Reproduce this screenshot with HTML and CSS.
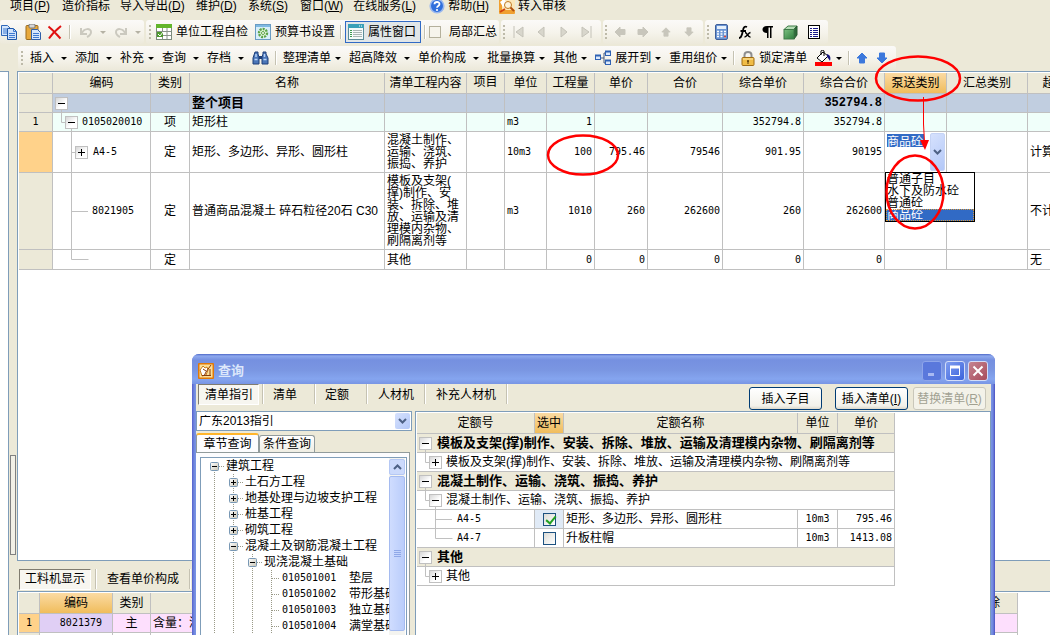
FILE: index.html
```html
<!DOCTYPE html>
<html lang="zh-CN">
<head>
<meta charset="utf-8">
<title>计价软件</title>
<link rel="stylesheet" href="styles.css">
</head>
<body>
<svg class="defs" width="0" height="0" aria-hidden="true">
  <defs>
    <linearGradient id="g-box" x1="0" y1="0" x2="1" y2="1"><stop offset="0" stop-color="#d4d4d4"/><stop offset="0.6" stop-color="#fff"/></linearGradient>
    <linearGradient id="g-small" x1="0" y1="0" x2="1" y2="1"><stop offset="0" stop-color="#fff"/><stop offset="1" stop-color="#c8c4b4"/></linearGradient>
    <linearGradient id="g-green" x1="0" y1="0" x2="1" y2="1"><stop offset="0" stop-color="#7cc080"/><stop offset="1" stop-color="#2e7d3c"/></linearGradient>
    <g id="box-minus"><rect x=".5" y=".5" width="12" height="12" fill="url(#g-box)" stroke="#c0c0c0"/><path d="M3 6.500h7" stroke="#000"/></g>
    <g id="box-plus"><rect x=".5" y=".5" width="12" height="12" fill="url(#g-box)" stroke="#c0c0c0"/><path d="M3 6.500h7M6.500 3v7" stroke="#000"/></g>
    <g id="sm-minus"><rect x=".5" y=".5" width="8" height="8" rx="1" fill="url(#g-small)" stroke="#7898b5"/><path d="M2 4.500h5" stroke="#000"/></g>
    <g id="sm-plus"><rect x=".5" y=".5" width="8" height="8" rx="1" fill="url(#g-small)" stroke="#7898b5"/><path d="M2 4.500h5M4.500 2v5" stroke="#000"/></g>
    <symbol id="caret" viewBox="0 0 6 3"><path d="M0 0h6L3 3z" fill="currentColor"/></symbol>
    <symbol id="chev" viewBox="0 0 9 6"><path d="M1 1l3.500 3.500L8 1" fill="none" stroke="#4d6185" stroke-width="2"/></symbol>
    <symbol id="arrow-up" viewBox="0 0 12 12"><path d="M6 1l5 5H8.500v5h-5V6H1z" fill="currentColor" stroke="currentColor" stroke-linejoin="round"/></symbol>
  </defs>
</svg>

<div class="app">
  <nav class="menubar">
    <button class="menu">项目(<u>P</u>)</button>
    <button class="menu menu-plain">造价指标</button>
    <button class="menu menu-long">导入导出(<u>D</u>)</button>
    <button class="menu">维护(<u>D</u>)</button>
    <button class="menu">系统(<u>S</u>)</button>
    <button class="menu">窗口(<u>W</u>)</button>
    <button class="menu menu-long">在线服务(<u>L</u>)</button>
    <button class="menu menu-icon"><svg width="16" height="16" viewBox="0 0 16 16"><circle cx="8" cy="8" r="6.800" fill="#2f6fdc" stroke="#9ab8ee" stroke-width="1.600"/><path d="M5.500 6.300c0-3 5-3 5-.3C10.500 8 8 7.800 8 9.800" fill="none" stroke="#fff" stroke-width="1.800"/><circle cx="8" cy="12" r="1.100" fill="#fff"/></svg><span class="menu-text">帮助(<u>H</u>)</span></button>
    <button class="menu menu-icon"><svg width="16" height="16" viewBox="0 0 16 16"><rect width="16" height="16" rx="1" fill="#f0a030"/><rect x="3" width="13" height="12" fill="#fbe6b8"/><path d="M1 4l4-3 3 4-4 4z" fill="#fff"/><circle cx="9" cy="7" r="3.500" fill="#fdf4dc" stroke="#c07820"/><path d="M11.500 9.500L15 13" stroke="#b05010" stroke-width="2"/><path d="M1 14l5-3" stroke="#d04010" stroke-width="2"/></svg>转入审核</button>
  </nav>

  <div class="bars">
    <div class="bar bar-edit">
      <button class="tool" aria-label="复制"><svg width="16" height="16" viewBox="0 0 16 16"><path d="M.5 1.500h6l3 3v7h-9z" fill="#d3e5fc" stroke="#2f67b8"/><path d="M2 5h4M2 7h4M2 9h4" stroke="#3f7ad0"/><path d="M6.500 4.500h6l3 3v8h-9z" fill="#cfe2fb" stroke="#1f57a8"/><path d="M12.500 4.500v3h3M8 9.500h6M8 11.500h6M8 13.500h6" fill="none" stroke="#3f7ad0"/></svg></button>
      <button class="tool" aria-label="粘贴"><svg width="16" height="16" viewBox="0 0 16 16"><rect x="1" y="1.500" width="12" height="14" rx="1" fill="#e8a93c" stroke="#9a6a1c"/><rect x="4" y="0" width="6" height="4" rx="1" fill="#d6d6d6" stroke="#777"/><path d="M6.500 5.500h6l3 3v7h-9z" fill="#d6e6fb" stroke="#2f5fa8"/><path d="M8 9.500h6M8 11.500h6M8 13.500h6" stroke="#3f7ad0"/></svg></button>
      <button class="tool del" aria-label="删除"><svg width="16" height="16" viewBox="0 0 16 16"><path d="M1.500 2.500C6 6 10 11 13.500 14.500M14 2C9 6 5 10 2 14.500" fill="none" stroke="#e01010" stroke-width="2"/></svg></button>
      <span class="sep"></span>
      <button class="tool off" aria-label="撤销"><svg width="14" height="14" viewBox="0 0 14 14"><path d="M2 3v6h6M3 8c2-5 9-5 9-1 0 3-2 4-4 5" fill="none" stroke="#cbc9bf" stroke-width="2"/></svg><svg class="caret"><use href="#caret"/></svg></button>
      <button class="tool off" aria-label="重做"><svg width="14" height="14" viewBox="0 0 14 14"><path d="M12 3v6H6M11 8C9 3 2 3 2 7c0 3 2 4 4 5" fill="none" stroke="#cbc9bf" stroke-width="2"/></svg><svg class="caret"><use href="#caret"/></svg></button>
    </div>
    <div class="bar bar-view">
      <span class="grip"></span>
      <button class="tool"><svg width="16" height="16" viewBox="0 0 16 16"><rect x=".5" y="1.500" width="15" height="14" fill="#fff" stroke="#7c8b7c"/><rect width="16" height="4" fill="#62b52a"/><path d="M1 7.500h14M1 11.500h14M6.500 4v11M11 4v11" stroke="#8a948a"/><rect x="1" y="8" width="6" height="5" fill="#4d9a2c"/><path d="M2 10l2 2 3-4" fill="none" stroke="#fff"/></svg>单位工程自检</button>
      <button class="tool"><svg width="16" height="16" viewBox="0 0 16 16"><rect x=".5" y=".5" width="15" height="15" fill="#d8eefa" stroke="#6a9cc4"/><rect x="1" y="1" width="14" height="2" fill="#7fb9e2"/><circle cx="8" cy="9" r="4" fill="#e8f8e0" stroke="#5ba346" stroke-width="2.400" stroke-dasharray="2 1"/><circle cx="8" cy="9" r="1.500" fill="#fff" stroke="#5ba346"/></svg>预算书设置</button>
      <span class="sep"></span>
      <button class="tool pressed"><svg width="16" height="16" viewBox="0 0 16 16"><rect x=".5" y=".5" width="15" height="15" fill="#f4fafa" stroke="#5a8c98"/><rect width="16" height="4" fill="#3aa0b8"/><path d="M11 2h1M13 2h1" stroke="#fff"/><path d="M2 6.500h2M2 8.500h2M2 10.500h2M2 12.500h2" stroke="#3a9a50"/><path d="M5 6.500h9M5 8.500h9M5 10.500h9M5 12.500h9" stroke="#a8b4b4"/></svg>属性窗口</button>
      <span class="sep sep-toggle"></span>
      <label class="toggle"><input type="checkbox">局部汇总</label>
    </div>
    <div class="bar bar-icons">
      <span class="grip"></span>
      <button class="ico" aria-label="首行"><svg width="12" height="12" viewBox="0 0 12 12"><path d="M2 0v12M11 1v10L4 6z" fill="#d8d6cc" stroke="#c4c2b8"/></svg></button>
      <button class="ico" aria-label="上一行"><svg width="12" height="12" viewBox="0 0 12 12"><path d="M9 1v10L3 6z" fill="#d8d6cc" stroke="#c4c2b8"/></svg></button>
      <button class="ico" aria-label="下一行"><svg width="12" height="12" viewBox="0 0 12 12"><path d="M3 1v10l6-5z" fill="#d8d6cc" stroke="#c4c2b8"/></svg></button>
      <button class="ico" aria-label="末行"><svg width="12" height="12" viewBox="0 0 12 12"><path d="M10 0v12M1 1v10l7-5z" fill="#d8d6cc" stroke="#c4c2b8"/></svg></button>
    </div>
    <div class="bar bar-icons">
      <span class="grip"></span>
      <button class="ico gray" aria-label="左移"><svg class="rot-l" width="12" height="12"><use href="#arrow-up"/></svg></button>
      <button class="ico gray" aria-label="右移"><svg class="rot-r" width="12" height="12"><use href="#arrow-up"/></svg></button>
      <button class="ico gray" aria-label="上移"><svg width="10" height="12"><use href="#arrow-up"/></svg></button>
      <button class="ico gray" aria-label="下移"><svg class="rot-d" width="10" height="12"><use href="#arrow-up"/></svg></button>
    </div>
    <div class="bar bar-icons">
      <span class="grip"></span>
      <button class="ico" aria-label="计算器"><svg width="13" height="16" viewBox="0 0 13 16"><rect x=".5" y=".5" width="12" height="15" rx="1.500" fill="#6b95d4" stroke="#3f5f9a"/><rect x="2" y="2" width="9" height="3" fill="#e6f0fb"/><path d="M2 7.500h9M2 10h9M2 12.500h9" stroke="#fff" stroke-width="1.500" stroke-dasharray="2 1.500"/><path d="M9 12.500h2" stroke="#e04030" stroke-width="1.500"/></svg></button>
      <button class="ico" aria-label="函数"><svg width="14" height="14" viewBox="0 0 14 14"><path d="M1 13c3 0 3-4 4-8 .5-3 2-4 4-3M2.500 6H8" fill="none" stroke="#000" stroke-width="1.800"/><path d="M7 7.500c2 0 3 5 5.500 4.500M12.500 7.500C10 8 9 12 6.500 12" fill="none" stroke="#000" stroke-width="1.500"/></svg></button>
      <button class="ico" aria-label="段落"><svg width="11" height="13" viewBox="0 0 11 13"><path d="M5 0h6v1.500H9.500V12H8V1.500H6.500V12H5V7C-1 7-1 0 5 0z" fill="#000"/></svg></button>
      <button class="ico" aria-label="模型"><svg width="15" height="15" viewBox="0 0 15 15"><path d="M1 4.500L5 1h9l-3 3.500z" fill="#b5ddb5" stroke="#3e7a48"/><path d="M11 4.500L14 1v9l-3 4z" fill="#2d6b3a" stroke="#28582f"/><rect x="1" y="4.500" width="10" height="9.500" fill="url(#g-green)" stroke="#3e7a48"/></svg></button>
      <button class="ico" aria-label="列表"><svg width="12" height="14" viewBox="0 0 12 14"><rect x=".5" y=".5" width="11" height="13" fill="#fff" stroke="#000"/><path d="M2 3.500h2M2 5.500h2M2 7.500h2M2 9.500h2M2 11.500h2M5 3.500h5M5 5.500h5M5 7.500h5M5 9.500h5M5 11.500h5" stroke="#1a1a8c"/></svg></button>
    </div>
  </div>

  <div class="bar bar-actions">
    <span class="grip"></span>
    <button class="act wide">插入<svg class="caret"><use href="#caret"/></svg></button>
    <button class="act wide">添加<svg class="caret"><use href="#caret"/></svg></button>
    <button class="act">补充<svg class="caret"><use href="#caret"/></svg></button>
    <button class="act wide">查询<svg class="caret"><use href="#caret"/></svg></button>
    <button class="act wide">存档<svg class="caret"><use href="#caret"/></svg></button>
    <button class="act" aria-label="查找"><svg width="17" height="14" viewBox="0 0 17 14"><path d="M3 1h3v2l1 3v7H1V7z M11 1h3v2l2 4v6h-6V6l1-3z" fill="#4b76b8" stroke="#1f3f78"/><path d="M7 5h3v3H7z" fill="#1f3f78"/><path d="M2.500 8.500h3M11.500 8.500h3M4 3v3M12.500 3v3" stroke="#b9d3f6" stroke-width="1.500"/></svg></button>
    <span class="sep"></span>
    <button class="act">整理清单<svg class="caret"><use href="#caret"/></svg></button>
    <button class="act wide">超高降效<svg class="caret"><use href="#caret"/></svg></button>
    <button class="act wide">单价构成<svg class="caret"><use href="#caret"/></svg></button>
    <button class="act">批量换算<svg class="caret"><use href="#caret"/></svg></button>
    <button class="act">其他<svg class="caret"><use href="#caret"/></svg></button>
    <button class="act"><svg width="16" height="16" viewBox="0 0 16 16"><path d="M6 8h3M9 3v10M9 3h2M9 13h2" fill="none" stroke="#45597c"/><rect x=".5" y="5.500" width="5" height="4" fill="#dbe8fb" stroke="#2f62b4"/><rect x="10.500" y="1.500" width="5" height="4" fill="#dbe8fb" stroke="#2f62b4"/><rect x="10.500" y="10.500" width="5" height="4" fill="#dbe8fb" stroke="#2f62b4"/><path d="M0 5.500h6M10 1.500h6M10 10.500h6" stroke="#2f62b4" stroke-width="2"/></svg>展开到<svg class="caret"><use href="#caret"/></svg></button>
    <button class="act">重用组价<svg class="caret"><use href="#caret"/></svg></button>
    <span class="sep"></span>
    <button class="act"><svg width="14" height="15" viewBox="0 0 14 15"><path d="M3.500 7V4c0-4 7-4 7 0v3" fill="none" stroke="#8f8f8f" stroke-width="2"/><rect x="1" y="6.500" width="12" height="8" rx="1" fill="#f0bc45" stroke="#a06c14"/><path d="M2 8h10" stroke="#fbe6a8"/><circle cx="7" cy="10" r="1" fill="#5a3a08"/><path d="M7 10v3" stroke="#5a3a08"/></svg>锁定清单</button>
    <button class="act" aria-label="填充颜色"><svg width="17" height="16" viewBox="0 0 17 16"><path d="M2 8l6-6 5 4-6 6z" fill="#fff" stroke="#000"/><path d="M6 5V1c0-1 3-1 3 0v5" fill="none" stroke="#000"/><path d="M12 4c3 1 4 3 3 7-1-2-2-3-3-4z" fill="#14147c"/><path d="M0 12h17v4H0z" fill="#f00"/></svg><svg class="caret"><use href="#caret"/></svg></button>
    <span class="sep"></span>
    <button class="act blue" aria-label="上移"><svg width="12" height="12"><use href="#arrow-up"/></svg></button>
    <button class="act blue" aria-label="下移"><svg class="rot-d" width="12" height="12"><use href="#arrow-up"/></svg></button>
  </div>

  <div class="workspace">
    <div class="side"></div>
    <div class="splitter"><span class="handle"></span></div>
    <main class="main">
      <section class="panel panel-main">
        <table class="grid grid-main">
          <colgroup><col class="c34"><col class="c98"><col class="c39"><col class="c195"><col class="c82"><col class="c38"><col class="c42"><col class="c48"><col class="c53"><col class="c75"><col class="c81"><col class="c81"><col class="c62"><col class="c81"><col class="c102"></colgroup>
          <thead><tr class="h21"><th></th><th>编码</th><th>类别</th><th>名称</th><th>清单工程内容</th><th class="raised">项目</th><th>单位</th><th>工程量</th><th>单价</th><th>合价</th><th>综合单价</th><th>综合合价</th><th class="hot">泵送类别</th><th>汇总类别</th><th>超高过滤类别</th></tr></thead>
          <tbody>
            <tr class="h19 total"><td class="rowno"></td><td class="tree"><div><svg width="16" height="18"><path d="M8.500 15v3" stroke="#c0c0c0"/><use href="#box-minus" x="2" y="3"/></svg></div></td><td></td><td>整个项目</td><td></td><td></td><td></td><td></td><td></td><td></td><td></td><td class="n">352794.8</td><td></td><td></td><td></td></tr>
            <tr class="h19 item"><td class="rowno num">1</td><td class="tree num"><div><svg width="29" height="18"><path d="M8.500 0v9.500h4M18.500 15v3" fill="none" stroke="#c0c0c0"/><use href="#box-minus" x="12" y="3"/></svg>0105020010</div></td><td class="c">项</td><td>矩形柱</td><td></td><td></td><td class="num">m3</td><td class="n">1</td><td></td><td></td><td class="n">352794.8</td><td class="n">352794.8</td><td></td><td></td><td></td></tr>
            <tr class="h41"><td class="rowno cur"></td><td class="tree num"><div><svg width="40" height="40"><path d="M18.500 0v40M18 20.500h5" stroke="#c0c0c0"/><use href="#box-plus" x="22" y="14"/></svg>A4-5</div></td><td class="c">定</td><td>矩形、多边形、异形、圆形柱</td><td class="wrap">混凝土制作、<br>运输、浇筑、<br>振捣、养护</td><td></td><td class="num">10m3</td><td class="n">100</td><td class="n">795.46</td><td class="n">79546</td><td class="n">901.95</td><td class="n">90195</td>
              <td class="combo-cell"><div class="cell-combo"><input type="text" value="商品砼" aria-label="泵送类别"><button aria-label="展开"><svg width="9" height="6"><use href="#chev"/></svg></button></div>
                <ul class="options" role="listbox"><li role="option">普通子目</li><li role="option">水下及防水砼</li><li role="option">普通砼</li><li role="option" aria-selected="true" class="picked">商品砼</li></ul></td>
              <td></td><td>计算超高</td></tr>
            <tr class="h77"><td class="rowno"></td><td class="tree num"><div><svg width="39" height="76"><path d="M18.500 0v76M18 38.500h17" stroke="#c0c0c0"/></svg>8021905</div></td><td class="c">定</td><td>普通商品混凝土 碎石粒径20石 C30</td><td class="wrap">模板及支架(<br>撑)制作、安<br>装、拆除、堆<br>放、运输及清<br>理模内杂物、<br>刷隔离剂等</td><td></td><td class="num">m3</td><td class="n">1010</td><td class="n">260</td><td class="n">262600</td><td class="n">260</td><td class="n">262600</td><td></td><td></td><td>不计算超高</td></tr>
            <tr class="h20"><td class="rowno"></td><td class="tree"><div><svg width="36" height="19"><path d="M18.500 0v9.500h17" fill="none" stroke="#c0c0c0"/></svg></div></td><td class="c">定</td><td></td><td>其他</td><td></td><td></td><td class="n">0</td><td class="n">0</td><td class="n">0</td><td class="n">0</td><td class="n">0</td><td></td><td></td><td>无</td></tr>
          </tbody>
        </table>
      </section>
      <div class="viewtabs"><button class="vtab on">工料机显示</button><span class="sep"></span><button class="vtab">查看单价构成</button><span class="sep"></span></div>
      <section class="panel panel-res">
        <table class="grid grid-res">
          <colgroup><col class="c21"><col class="c73"><col class="c38"><col><col class="c102"></colgroup>
          <thead><tr class="h21"><th></th><th class="hot">编码</th><th>类别</th><th></th><th class="last">除</th></tr></thead>
          <tbody><tr class="h19 res"><td class="rowno cur num">1</td><td class="num code">8021379</td><td class="c">主</td><td>含量：浇筑</td><td></td></tr>
          <tr class="h19"><td class="rowno"></td><td></td><td></td><td></td><td></td></tr></tbody>
        </table>
      </section>
    </main>
  </div>
</div>

<section class="dialog" role="dialog" aria-label="查询">
  <header class="titlebar">
    <svg width="16" height="16" viewBox="0 0 16 16"><rect width="16" height="16" rx="1" fill="#e07808"/><rect x="1.500" y="1.500" width="13" height="13" fill="#fbdf98"/><path d="M2 7l3-4 2 2 2-1 1 3-2 5-4 1z" fill="#fff" stroke="#c87818"/><path d="M13 2L8 9l-2 4M4 12.500h9M5 6l3 2M12 6v6" stroke="#8c3c08" fill="none"/></svg>
    <h1>查询</h1>
    <button class="wb min" aria-label="最小化"><svg width="12" height="12"><path d="M2 9.500h6" stroke="#a9b9f2" stroke-width="3"/></svg></button>
    <button class="wb max" aria-label="最大化"><svg width="12" height="12"><path d="M1.500 1v9.500h9V1" fill="none" stroke="#fff"/><path d="M1 2h10" stroke="#fff" stroke-width="3"/></svg></button>
    <button class="wb close" aria-label="关闭"><svg width="12" height="12"><path d="M1.500 1.500l9 9M10.500 1.500l-9 9" stroke="#fff" stroke-width="2"/></svg></button>
  </header>
  <div class="dbar">
    <button class="vtab on">清单指引</button><span class="sep"></span><button class="vtab">清单</button><span class="sep"></span><button class="vtab">定额</button><span class="sep"></span><button class="vtab vtab-s">人材机</button><span class="sep"></span><button class="vtab vtab-s">补充人材机</button><span class="sep"></span>
    <div class="cmds"><button class="cmd first">插入子目</button><button class="cmd">插入清单(<u>I</u>)</button><button class="cmd" disabled>替换清单(<u>R</u>)</button></div>
  </div>
  <div class="dbody">
    <div class="dleft">
      <div class="combo"><select aria-label="指引"><option>广东2013指引</option></select><span class="drop"><svg width="9" height="6"><use href="#chev"/></svg></span></div>
      <div class="tabs"><button class="tab active">章节查询</button><button class="tab">条件查询</button></div>
      <div class="tabpage">
        <div class="treebox">
          <ul class="chapters">
            <li><svg width="25" height="16"><path class="dots" d="M13.500 12v4M18 8.500h5"/><use href="#sm-minus" x="9" y="4"/></svg>建筑工程</li>
            <li><svg width="44" height="16"><path class="dots" d="M13.500 0v16M32.500 0v16M37 8.500h5"/><use href="#sm-plus" x="28" y="4"/></svg>土石方工程</li>
            <li><svg width="44" height="16"><path class="dots" d="M13.500 0v16M32.500 0v16M37 8.500h5"/><use href="#sm-plus" x="28" y="4"/></svg>地基处理与边坡支护工程</li>
            <li><svg width="44" height="16"><path class="dots" d="M13.500 0v16M32.500 0v16M37 8.500h5"/><use href="#sm-plus" x="28" y="4"/></svg>桩基工程</li>
            <li><svg width="44" height="16"><path class="dots" d="M13.500 0v16M32.500 0v16M37 8.500h5"/><use href="#sm-plus" x="28" y="4"/></svg>砌筑工程</li>
            <li><svg width="44" height="16"><path class="dots" d="M13.500 0v16M32.500 0v16M37 8.500h5"/><use href="#sm-minus" x="28" y="4"/></svg>混凝土及钢筋混凝土工程</li>
            <li><svg width="63" height="16"><path class="dots" d="M13.500 0v16M32.500 0v16M51.500 0v16M56 8.500h5"/><use href="#sm-minus" x="47" y="4"/></svg>现浇混凝土基础</li>
            <li><svg width="81" height="16"><path class="dots" d="M13.500 0v16M32.500 0v16M51.500 0v16M70.500 0v16M71 8.500h8"/></svg><span class="num ccode">010501001</span>垫层</li>
            <li><svg width="81" height="16"><path class="dots" d="M13.500 0v16M32.500 0v16M51.500 0v16M70.500 0v16M71 8.500h8"/></svg><span class="num ccode">010501002</span>带形基础</li>
            <li><svg width="81" height="16"><path class="dots" d="M13.500 0v16M32.500 0v16M51.500 0v16M70.500 0v16M71 8.500h8"/></svg><span class="num ccode">010501003</span>独立基础</li>
            <li><svg width="81" height="16"><path class="dots" d="M13.500 0v16M32.500 0v16M51.500 0v16M70.500 0v16M71 8.500h8"/></svg><span class="num ccode">010501004</span>满堂基础</li>
          </ul>
          <div class="scroll"><button class="sbtn" aria-label="向上滚动"><svg class="rot-d" width="9" height="6"><use href="#chev"/></svg></button><div class="thumb"><svg width="7" height="8"><path d="M0 .5h7M0 2.500h7M0 4.500h7M0 6.500h7" stroke="#8fa8e8"/></svg></div></div>
        </div>
      </div>
    </div>
    <div class="dright">
      <table class="grid grid-quota">
        <colgroup><col class="c118"><col class="c29"><col class="c234"><col class="c40"><col class="c57"></colgroup>
        <thead><tr class="h21"><th>定额号</th><th class="hot">选中</th><th>定额名称</th><th>单位</th><th>单价</th></tr></thead>
        <tbody>
          <tr class="h19 group"><td class="tree" colspan="5"><div><svg width="20" height="18"><path d="M8.500 15v3" stroke="#c0c0c0"/><use href="#box-minus" x="2" y="3"/></svg>模板及支架(撑)制作、安装、拆除、堆放、运输及清理模内杂物、刷隔离剂等</div></td></tr>
          <tr class="h19"><td class="tree" colspan="5"><div><svg width="29" height="18"><path d="M8.500 0v9.500h4" fill="none" stroke="#c0c0c0"/><use href="#box-plus" x="12" y="3"/></svg>模板及支架(撑)制作、安装、拆除、堆放、运输及清理模内杂物、刷隔离剂等</div></td></tr>
          <tr class="h19 group"><td class="tree" colspan="5"><div><svg width="20" height="18"><path d="M8.500 15v3" stroke="#c0c0c0"/><use href="#box-minus" x="2" y="3"/></svg>混凝土制作、运输、浇筑、振捣、养护</div></td></tr>
          <tr class="h19"><td class="tree" colspan="5"><div><svg width="29" height="18"><path d="M8.500 0v9.500h4M18.500 15v3" fill="none" stroke="#c0c0c0"/><use href="#box-minus" x="12" y="3"/></svg>混凝土制作、运输、浇筑、振捣、养护</div></td></tr>
          <tr class="h19"><td class="tree num"><div><svg width="40" height="18"><path d="M18.500 0v18M18 9.500h17" stroke="#c0c0c0"/></svg>A4-5</div></td><td class="c tick"><input type="checkbox" checked aria-label="A4-5"></td><td>矩形、多边形、异形、圆形柱</td><td class="c num">10m3</td><td class="n">795.46</td></tr>
          <tr class="h19"><td class="tree num"><div><svg width="40" height="18"><path d="M18.500 0v9.500h17" fill="none" stroke="#c0c0c0"/></svg>A4-7</div></td><td class="c"><input type="checkbox" aria-label="A4-7"></td><td>升板柱帽</td><td class="c num">10m3</td><td class="n">1413.08</td></tr>
          <tr class="h19 group"><td class="tree" colspan="5"><div><svg width="20" height="18"><path d="M8.500 15v3" stroke="#c0c0c0"/><use href="#box-minus" x="2" y="3"/></svg>其他</div></td></tr>
          <tr class="h19"><td class="tree" colspan="5"><div><svg width="29" height="18"><path d="M8.500 0v9.500h4" fill="none" stroke="#c0c0c0"/><use href="#box-plus" x="12" y="3"/></svg>其他</div></td></tr>
        </tbody>
      </table>
    </div>
  </div>
</section>

<svg class="marks" width="1050" height="635" viewBox="0 0 1050 635" aria-hidden="true">
  <g fill="none" stroke="#f00" stroke-width="2.500"><ellipse cx="918" cy="78.500" rx="42" ry="22"/><ellipse cx="583" cy="155" rx="35" ry="19.500"/><ellipse cx="915" cy="192" rx="28.500" ry="36.500"/></g>
  <path d="M923.500 97v27l1 18" fill="none" stroke="#f00"/><path d="M920 140h9l-4 10z" fill="#f00"/>
</svg>
</body>
</html>
```

FILE: styles.css
```css
* { box-sizing: border-box; }
html, body { height: 100%; }
body {
  margin: 0;
  overflow: hidden;
  background: #ece9d8;
  color: #000;
  font: 12px/12px "Liberation Sans", "Noto Sans CJK SC", sans-serif;
}
button, input, select { font: inherit; color: inherit; margin: 0; padding: 0; border: 0; background: none; }
button { white-space: nowrap; }
svg { display: block; flex: none; }
ul { list-style: none; margin: 0; padding: 0; }
.defs, .marks { position: absolute; left: 0; top: 0; pointer-events: none; }
.marks { z-index: 5; }
.num, .n { font-family: "DejaVu Sans Mono", monospace; font-size: 10px; }

.app { display: flex; flex-direction: column; height: 100vh; }

/* menu and toolbars */
.menubar { display: flex; gap: 10px; height: 20px; padding: 0 10px 8px; align-items: center; overflow: hidden; }
.menu { min-width: 42px; text-align: left; }
.menu-plain { min-width: 48px; }
.menu-long { min-width: 66px; }
.menu-icon { display: flex; align-items: center; gap: 3px; }
.menu-text { min-width: 40px; }

.bars { display: flex; gap: 2px; height: 26px; }
.bar {
  display: flex;
  align-items: center;
  flex: none;
  height: 24px;
  border-radius: 3px;
  background: linear-gradient(#fbfaf8, #f6f4ec 50%, #ece9da);
}
.grip { width: 2px; height: 14px; margin-right: 4px; background: repeating-linear-gradient(#bdbaa9 0 2px, transparent 2px 4px); }
.sep { width: 2px; height: 14px; background: #c5c2b2; border-right: 1px solid #fff; }
.caret { width: 6px; height: 3px; }
.tool { display: flex; align-items: center; gap: 4px; }
.bar-edit { width: 144px; gap: 8px; padding-left: 1px; }
.bar-edit .del { margin: 0 -2px; }
.bar-edit .off { gap: 7px; color: #b5b2a4; }
.bar-view { gap: 5px; padding: 0 2px 0 3px; }
.bar-view .grip { margin-right: 0; }
.bar-view .tool + .tool { margin-left: 2px; }
.bar-view .sep + .tool { margin-left: -2px; }
.bar-view .sep-toggle { margin: 0 -2px; }
.pressed { height: 22px; padding: 0 4px 0 2px; border: 1px solid #316ac5; background: #e1e6e8; }
.toggle { display: flex; align-items: center; gap: 8px; }
.toggle input { appearance: none; width: 12px; height: 12px; border: 1px solid #b4b09c; background: #f6f4ec; }
.bar-icons { padding: 0 3px 0 2px; }
.ico { display: flex; align-items: center; justify-content: center; width: 23px; height: 22px; }
.bar-icons .grip { margin-right: 1px; }
.gray { color: #c8c6bc; }
.rot-l { transform: rotate(-90deg); }
.rot-r { transform: rotate(90deg); }
.rot-d { transform: rotate(180deg); }

.bar-actions { align-self: flex-start; gap: 8px; margin-left: 18px; padding: 0 8px 0 3px; }
.bar-actions .grip { margin-right: -1px; }
.bar-actions .sep { margin: 0 -2px; }
.act { display: flex; align-items: center; gap: 4px; }
.wide { gap: 7px; }
.blue { color: #3c78dc; }

/* workspace */
.workspace { display: flex; flex: 1; min-height: 0; margin-top: 1px; }
.side { width: 9px; background: #fff; border: solid #7f9db9; border-width: 1px 1px 0 0; }
.splitter { display: flex; width: 8px; padding: 384px 1px 0; }
.handle { width: 6px; height: 100px; border: 1px solid #808080; background: #f2f0e6; }
.main { display: flex; flex-direction: column; flex: 1; min-width: 0; }
.panel { background: #fff; border: 1px solid #7f9db9; border-right: 0; padding: 1px 0 0 1px; overflow: hidden; }
.panel-main { flex: 1; min-height: 0; }
.panel-res { height: 44px; flex: none; border-bottom: 0; }

/* data grids */
.grid { table-layout: fixed; border-collapse: separate; border-spacing: 0; }
.grid th, .grid td { padding: 0 2px; border: solid #c0c0c0; border-width: 0 1px 1px 0; white-space: nowrap; overflow: hidden; text-align: left; vertical-align: middle; }
.grid th { background: #ece9d8; font-weight: normal; text-align: center; padding: 0; }
.grid .raised { padding-bottom: 3px; }
.grid .hot { background: linear-gradient(#fbdba3, #f0bd5c); }
.grid .n { text-align: right; }
.grid .c { text-align: center; }
.grid .rowno { background: #ece9d8; text-align: center; }
.grid .cur { background: #ffd28a; }
.grid .tree { padding: 0; }
.tree > div { display: flex; align-items: center; }
.wrap { line-height: 12px; }
.grid-main { width: 1092px; }
.grid-res { width: calc(100% - 32px); }
.grid-quota { width: 478px; }
.h19 { height: 19px; } .h20 { height: 20px; } .h21 { height: 21px; } .h41 { height: 41px; } .h77 { height: 77px; }
.c21 { width: 21px; } .c29 { width: 29px; } .c34 { width: 34px; } .c38 { width: 38px; } .c39 { width: 39px; }
.c40 { width: 40px; } .c42 { width: 42px; } .c48 { width: 48px; } .c53 { width: 53px; } .c57 { width: 57px; }
.c62 { width: 62px; } .c73 { width: 73px; } .c75 { width: 75px; } .c81 { width: 81px; } .c82 { width: 82px; }
.c98 { width: 98px; } .c102 { width: 102px; } .c118 { width: 118px; } .c195 { width: 195px; } .c234 { width: 234px; }
.total td { background: #c1cee0; font-weight: bold; font-size: 13px; }
.total .n { font-family: "Liberation Mono", monospace; font-size: 12px; }
.item td { background: #f0fffa; }
.res td { background: #fddffd; }
.res .code { background: #e0cff5; text-align: right; padding-right: 10px; }
.grid-res .last { text-align: right; padding-right: 17px; }
.group td { background: #ece9d8; font-weight: bold; font-size: 13px; }
.tick { background: #e0eaf6; }

.grid .combo-cell { position: relative; padding: 0; overflow: visible; }
.cell-combo { display: flex; justify-content: space-between; height: 40px; padding: 1px 1px 1px 2px; }
.cell-combo input { width: 37px; height: 13px; margin-top: 1px; background: #316ac5; color: #fff; }
.cell-combo button { display: flex; align-items: center; justify-content: center; width: 15px; border: 1px solid #c5d3f5; background: linear-gradient(135deg, #d6e1fd, #b3c8f8); border-radius: 2px; }
.options { position: absolute; left: 0; top: 40px; width: 90px; border: 1px solid #000; background: #fff; z-index: 1; }
.options li { height: 12px; padding-left: 1px; }
.options .picked { background: #316ac5; color: #fff; outline: 1px dotted #d89a3c; outline-offset: -1px; }

.grid input[type="checkbox"] { appearance: none; display: block; width: 13px; height: 13px; margin: 0 auto; border: 1px solid #1c5180; background: linear-gradient(135deg, #dcdcd7, #fff); }
.grid input[type="checkbox"]:checked::after { content: ""; display: block; width: 4px; height: 8px; margin: 0 0 0 4px; border: solid #21a121; border-width: 0 2px 2px 0; transform: rotate(40deg); }

/* pressed and flat tabs */
.viewtabs { display: flex; align-items: center; height: 30px; padding: 6px 0 0 2px; flex: none; }
.vtab { height: 21px; padding: 0 11px; }
.vtab.on { padding: 0 6px; border: 1px solid; border-color: #807c70 #fff #fff #807c70; background: #f7f6f0; }
.viewtabs .sep, .dbar .sep { height: 20px; }
.viewtabs .on + .sep { margin-left: 4px; }
.viewtabs .vtab { padding: 0 10px; }
.viewtabs .vtab.on { padding: 0 5px; }

/* query window */
.dialog {
  position: absolute;
  left: 192px;
  right: 55px;
  top: 354px;
  bottom: 0;
  display: flex;
  flex-direction: column;
  padding: 0 4px;
  border-radius: 7px 7px 0 0;
  background: linear-gradient(90deg, #5560cc 0, #6f86de 2px, #7b95e4 4px, #7b95e4 calc(100% - 4px), #6f86de calc(100% - 2px), #4a4fc0 100%);
  overflow: hidden;
}
.titlebar {
  display: flex;
  align-items: center;
  gap: 3px;
  height: 30px;
  flex: none;
  margin: 0 -4px;
  padding: 3px 7px 0 6px;
  background: linear-gradient(#4d67c6 0, #8ea9ee 2px, #7590e0 6px, #7a96e2 16px, #85a5ef 25px, #7895e4 100%);
}
.titlebar h1 { flex: 1; margin: 0 0 0 1px; font-size: 13px; line-height: 16px; color: #dce7fb; }
.wb { display: flex; align-items: center; justify-content: center; width: 20px; height: 20px; border: 1px solid #d3ddf8; border-radius: 3px; background: linear-gradient(135deg, #7f9df0, #3a62dc); }
.min { background: #5a78dc; border-color: #8ea5ea; }
.close { background: linear-gradient(135deg, #c58490, #a84c5c); }
.dbar { display: flex; height: 27px; padding-left: 2px; background: #ece9d8; flex: none; }
.dbar .sep + .vtab { width: 50px; padding: 0 0 0 9px; text-align: left; }
.dbar .sep + .vtab-s { width: auto; padding: 0 10px; }
.dbar .on { width: 61px; margin-right: 3px; }
.cmds { display: flex; gap: 5px; margin-left: auto; padding: 3px 5px 0 0; }
.cmd { width: 73px; height: 23px; border: 1px solid #003c74; border-radius: 3px; background: linear-gradient(#fff, #f2f1ea 85%, #dcd8cc); }
.cmd.first { margin-right: 8px; }
.cmd:disabled { color: #a1a192; border-color: #c9c7ba; background: #f3f2e9; }
.dbody { display: flex; gap: 3px; flex: 1; min-height: 0; background: #ece9d8; }
.dleft { display: flex; flex-direction: column; width: 216px; flex: none; }
.dright { flex: 1; border: solid #7f9db9; border-width: 1px 1px 0; background: #fff; padding: 1px 0 0 1px; overflow: hidden; }
.combo { position: relative; height: 20px; border: 1px solid #7f9db9; background: #fff; flex: none; }
.combo select { appearance: none; width: 100%; height: 18px; padding-left: 2px; outline: 0; }
.drop { position: absolute; right: 1px; top: 1px; display: flex; align-items: center; justify-content: center; width: 15px; height: 16px; border-radius: 2px; background: linear-gradient(135deg, #d6e1fd, #b3c8f8); pointer-events: none; }
.tabs { display: flex; align-items: flex-end; height: 21px; flex: none; }
.tab { height: 17px; width: 56px; border: 1px solid #919b9c; border-bottom: 0; border-radius: 3px 3px 0 0; background: linear-gradient(#fff, #eeede3); }
.tab.active { height: 19px; width: 63px; border-top: 2px solid #ffb52b; background: #fcfcfe; }
.tabpage { flex: 1; min-height: 0; margin-right: 2px; padding: 4px 2px 0 4px; border: solid #919b9c; border-width: 1px 1px 0 0; background: #fcfcfe; }
.treebox { display: flex; justify-content: space-between; height: 100%; border: solid #7f9db9; border-width: 1px 1px 0; background: #fff; padding: 0 1px; overflow: hidden; }
.chapters { flex: 1; min-width: 0; margin-left: -1px; overflow: hidden; }
.chapters li { display: flex; align-items: center; height: 16px; white-space: nowrap; }
.ccode { width: 67px; flex: none; }
.dots { fill: none; stroke: #9a9a88; stroke-dasharray: 1 1; }
.scroll { display: flex; flex-direction: column; gap: 1px; width: 16px; padding: 1px 0 4px; background: #f4f4f0; flex: none; }
.sbtn { display: flex; align-items: center; justify-content: center; height: 16px; border: 1px solid #b5c8f4; border-radius: 2px; background: #ccdafc; flex: none; }
.thumb { display: flex; align-items: center; justify-content: center; flex: 1; border: 1px solid #a5bbf0; border-radius: 2px; background: linear-gradient(90deg, #cfdcfe, #bacdfb); }
```
